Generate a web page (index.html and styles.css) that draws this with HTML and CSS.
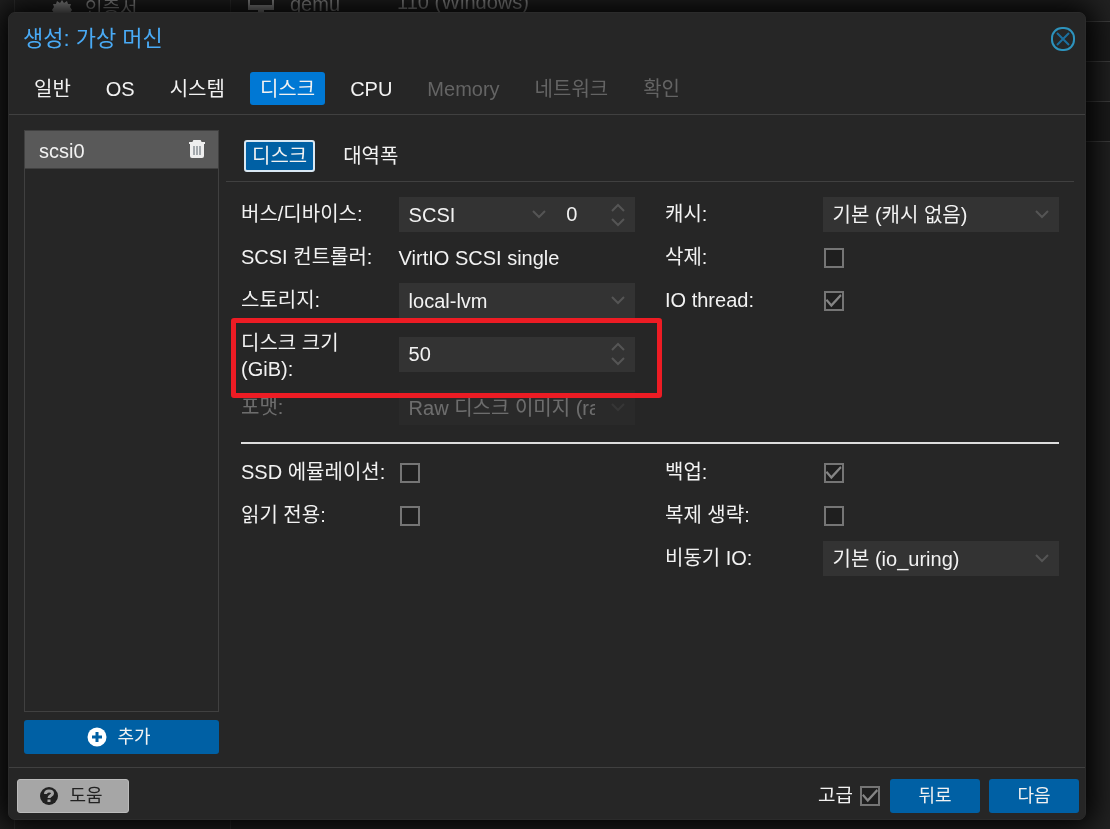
FILE: index.html
```html
<!DOCTYPE html>
<html lang="ko">
<head>
  <meta charset="UTF-8">
  <meta name="viewport" content="width=device-width, initial-scale=1.0">
  <title>생성: 가상 머신</title>
  <link rel="stylesheet" href="styles.css">
</head>
<body>
  <svg width="0" height="0" class="sprite" aria-hidden="true">
    <symbol id="down" viewBox="0 0 14 20"><path d="M1 6l6 6 6-6"/></symbol>
    <symbol id="spin" viewBox="0 0 14 24"><path d="M1 8l6-6 6 6M1 16l6 6 6-6"/></symbol>
  </svg>

  <!-- page behind the dialog -->
  <div class="backdrop">
    <div class="side">
      <svg width="20" height="20" viewBox="0 0 20 20"><path fill="currentColor" d="M10 0l2 3 3-2 1 3 3 0-1 3 2 3-2 3 1 3-3 0-1 3-3-2-2 3-2-3-3 2-1-3-3 0 1-3-2-3 2-3-1-3 3 0 1-3 3 2z"/></svg>
      <span>인증서</span>
    </div>
    <div class="grid">
      <div class="line first">
        <svg width="28" height="24" viewBox="0 0 28 24"><path fill="none" stroke="currentColor" stroke-width="2" d="M2 1h24v17H2z"/><path fill="currentColor" d="M2 14h24v4H2zM11 18h6v3h-6z"/></svg>
        <span>qemu</span>
        <span class="desc">110 (Windows)</span>
      </div>
      <div class="line"></div>
      <div class="line"></div>
      <div class="line"></div>
    </div>
  </div>

  <main class="wizard">
    <header class="title">
      <h1>생성: 가상 머신</h1>
      <button type="button" class="close" aria-label="닫기">
        <svg width="26" height="26" viewBox="0 0 26 26" fill="none"><rect x="2" y="2" width="22" height="22" rx="10" stroke="#2d93bd" stroke-width="2"/><path d="M7 7l12 12M19 7L7 19" stroke="#1b6f9f" stroke-width="2"/></svg>
      </button>
    </header>
    <nav class="tabs">
      <button type="button">일반</button>
      <button type="button">OS</button>
      <button type="button">시스템</button>
      <button type="button" class="active">디스크</button>
      <button type="button">CPU</button>
      <button type="button" disabled>Memory</button>
      <button type="button" disabled>네트워크</button>
      <button type="button" disabled>확인</button>
    </nav>

    <div class="content">
      <aside class="disks">
        <div class="disk-list">
          <div class="disk">
            <span>scsi0</span>
            <button type="button" aria-label="제거">
              <svg width="18" height="20" viewBox="0 0 18 20"><path fill="none" stroke="#eee" stroke-width="2" d="M5 4l1-2h6l1 2"/><path fill="#eee" d="M1 3h16v2H1zM2 5h14v12q0 2-2 2H4q-2 0-2-2z"/><path stroke="#59636b" stroke-width="1" d="M6 7v9M9 7v9M12 7v9"/></svg>
            </button>
          </div>
        </div>
        <button type="button" class="btn add">
          <svg width="20" height="20" viewBox="0 0 20 20"><circle cx="10" cy="10" r="9.500" fill="#fff"/><path stroke="#0060a4" stroke-width="3" d="M10 5v10M5 10h10"/></svg>
          추가
        </button>
      </aside>

      <section class="panel">
        <nav class="subtabs">
          <button type="button" class="active">디스크</button>
          <button type="button">대역폭</button>
        </nav>

        <form class="form">
          <div class="cols">
            <div class="col">
              <div class="row">
                <label for="bus">버스/디바이스:</label>
                <div class="pair">
                  <div class="field">
                    <select id="bus"><option>SCSI</option></select>
                    <svg class="arrow"><use href="#down"/></svg>
                  </div>
                  <div class="field">
                    <input type="number" value="0" aria-label="디바이스">
                    <svg class="spin"><use href="#spin"/></svg>
                  </div>
                </div>
              </div>
              <div class="row">
                <span class="label">SCSI 컨트롤러:</span>
                <span>VirtIO SCSI single</span>
              </div>
              <div class="row">
                <label for="storage">스토리지:</label>
                <div class="field">
                  <select id="storage"><option>local-lvm</option></select>
                  <svg class="arrow"><use href="#down"/></svg>
                </div>
              </div>
              <div class="row marked">
                <label for="size">디스크 크기 (GiB):</label>
                <div class="field">
                  <input id="size" type="number" value="50">
                  <svg class="spin"><use href="#spin"/></svg>
                </div>
              </div>
              <div class="row off">
                <label for="format">포맷:</label>
                <div class="field">
                  <select id="format" disabled><option>Raw 디스크 이미지 (raw)</option></select>
                  <svg class="arrow"><use href="#down"/></svg>
                </div>
              </div>
            </div>
            <div class="col">
              <div class="row">
                <label for="cache">캐시:</label>
                <div class="field">
                  <select id="cache"><option>기본 (캐시 없음)</option></select>
                  <svg class="arrow"><use href="#down"/></svg>
                </div>
              </div>
              <div class="row">
                <label for="discard">삭제:</label>
                <input id="discard" type="checkbox">
              </div>
              <div class="row">
                <label for="iothread">IO thread:</label>
                <input id="iothread" type="checkbox" checked>
              </div>
            </div>
          </div>

          <hr>

          <div class="cols">
            <div class="col">
              <div class="row">
                <label for="ssd">SSD 에뮬레이션:</label>
                <input id="ssd" type="checkbox">
              </div>
              <div class="row">
                <label for="readonly">읽기 전용:</label>
                <input id="readonly" type="checkbox">
              </div>
            </div>
            <div class="col">
              <div class="row">
                <label for="backup">백업:</label>
                <input id="backup" type="checkbox" checked>
              </div>
              <div class="row">
                <label for="norepl">복제 생략:</label>
                <input id="norepl" type="checkbox">
              </div>
              <div class="row">
                <label for="aio">비동기 IO:</label>
                <div class="field">
                  <select id="aio"><option>기본 (io_uring)</option></select>
                  <svg class="arrow"><use href="#down"/></svg>
                </div>
              </div>
            </div>
          </div>
        </form>
      </section>
    </div>

    <footer class="footer">
      <button type="button" class="btn help">
        <svg width="20" height="20" viewBox="0 0 20 20"><circle cx="10" cy="10" r="9" fill="#222"/><path fill="none" stroke="#a6a6a6" stroke-width="3" d="M6.500 8q0-3 3.500-3t3.500 2.500c0 2-3.500 2-3.500 4.500M10 13.500v2.500"/></svg>
        도움
      </button>
      <label class="advanced">고급 <input type="checkbox" checked></label>
      <button type="button" class="btn">뒤로</button>
      <button type="button" class="btn">다음</button>
    </footer>
  </main>
</body>
</html>
```
FILE: styles.css
```css
*, ::before, ::after {
  box-sizing: border-box;
}
body {
  display: flex;
  min-height: 100vh;
  margin: 0;
  color: #f2f2f2;
  font: 20px/26px "Liberation Sans", "Noto Sans CJK KR", sans-serif;
  background: #222;
}
button, input, select {
  margin: 0;
  padding: 0;
  color: inherit;
  font: inherit;
  background: none;
  border: 0;
  border-radius: 0;
}
.sprite {
  position: absolute;
}

/* page behind the dialog */
.backdrop {
  position: fixed;
  inset: 0;
  z-index: -1;
  display: flex;
  overflow: hidden;
  color: #999;
}
.side {
  display: flex;
  align-items: flex-start;
  gap: 13px;
  width: 217px;
  margin-left: 14px;
  padding-left: 37px;
  border: 1px solid #333;
  border-width: 0 1px;
}
.side span {
  margin-top: -4px;
  font-size: 19px;
}
.grid {
  flex: 1;
}
.line {
  height: 40px;
  border-bottom: 1px solid #404040;
}
.line:nth-child(even) {
  background: #1c1c1c;
}
.line.first {
  display: flex;
  align-items: flex-start;
  gap: 15px;
  height: 22px;
  padding-left: 16px;
}
.first svg {
  margin-top: -9px;
}
.first span {
  margin-top: -9px;
}
.first .desc {
  margin: -11px 0 0 42px;
}

.wizard {
  flex: 1;
  display: flex;
  flex-direction: column;
  min-width: 0;
  margin: 12px 24px 9px 8px;
  background: #262626;
  border: 1px solid #2b2b2b;
  border-radius: 7px;
  box-shadow: 0 0 30px 8px #000;
}
.title {
  display: flex;
  align-items: center;
  justify-content: space-between;
  height: 52px;
  padding: 0 9px 0 14px;
}
.title h1 {
  margin: 0;
  color: #49aaf5;
  font-size: 22px;
  font-weight: normal;
}
.close {
  display: flex;
}
.tabs {
  display: flex;
  gap: 15px;
  height: 50px;
  padding: 7px 15px 9px;
  border-bottom: 1px solid #404040;
}
.tabs button, .subtabs button {
  padding: 0 10px;
  border-radius: 3px;
}
.tabs .active {
  background: #0078d4;
}
.tabs button:disabled {
  color: #646464;
}

.content {
  flex: 1;
  display: flex;
  gap: 7px;
  padding: 15px 11px 13px 15px;
}
.disks {
  display: flex;
  flex-direction: column;
  gap: 8px;
  width: 195px;
}
.disk-list {
  flex: 1;
  border: 1px solid #404040;
}
.disk {
  display: flex;
  align-items: center;
  justify-content: space-between;
  height: 38px;
  padding: 2px 12px 0 14px;
  background: #595959;
  border-bottom: 1px solid #404040;
}
.disk button {
  display: flex;
  padding-bottom: 4px;
}
.btn {
  display: flex;
  align-items: center;
  justify-content: center;
  gap: 10px;
  width: 90px;
  height: 34px;
  font-size: 18px;
  background: #0060a4;
  border-radius: 3px;
}
.add {
  width: 100%;
  padding-right: 5px;
}

.panel {
  flex: 1;
  min-width: 0;
}
.subtabs {
  display: flex;
  align-items: center;
  gap: 18px;
  height: 52px;
  padding-left: 18px;
  border-bottom: 1px solid #404040;
}
.subtabs button {
  height: 32px;
}
.subtabs .active {
  padding: 0 6px;
  background: #0060a4;
  border: 2px solid #d9e8f3;
}
.form {
  padding: 15px 15px 0;
}
.cols {
  display: grid;
  grid-template-columns: 1fr 1fr;
  gap: 30px;
}
.col {
  display: flex;
  flex-direction: column;
  gap: 8px;
  min-width: 0;
}
.row {
  position: relative;
  display: grid;
  grid-template-columns: 2fr 3fr;
  align-items: center;
  min-height: 35px;
}
.row label, .label {
  align-self: start;
  padding: 4px 8px 0 0;
}
.pair {
  display: grid;
  grid-template-columns: 2fr 1fr;
}
.field {
  display: grid;
  align-items: center;
  min-width: 0;
  height: 35px;
  background: #333;
}
.field > * {
  grid-area: 1 / 1;
}
.field select, .field input {
  width: 100%;
  min-width: 0;
  height: 35px;
  padding: 0 40px 0 10px;
  appearance: none;
  -moz-appearance: textfield;
}
.field select:disabled {
  opacity: 1;
}
.field ::-webkit-inner-spin-button {
  appearance: none;
}
.arrow, .spin {
  justify-self: end;
  width: 14px;
  height: 20px;
  margin-right: 10px;
  fill: none;
  stroke: #555;
  stroke-width: 2;
  pointer-events: none;
}
.spin {
  height: 24px;
}
.off {
  opacity: .35;
}
/* red frame round the row to change */
.marked::after {
  content: "";
  position: absolute;
  inset: -8px -27px -16px -10px;
  z-index: 1;
  border: 5px solid #ed1c24;
  border-radius: 3px;
  pointer-events: none;
}
[type="checkbox"] {
  display: grid;
  width: 20px;
  height: 20px;
  margin-left: 1px;
  appearance: none;
  background: #1f1f1f;
  border: 2px solid #757575;
}
[type="checkbox"]:checked::after {
  content: "";
  background: #858585;
  clip-path: polygon(0 50%, 10% 40%, 36% 70%, 92% 10%, 100% 22%, 36% 92%);
}
hr {
  height: 2px;
  margin: 17px 0 11px;
  background: #ddd;
  border: 0;
}

.footer {
  display: flex;
  align-items: center;
  gap: 9px;
  height: 52px;
  padding: 4px 6px 0 8px;
  border-top: 1px solid #404040;
}
.help {
  width: 112px;
  margin-right: auto;
  padding-right: 4px;
  color: #222;
  background: #a6a6a6;
  border: 1px solid #bbb;
}
.advanced {
  display: flex;
  align-items: center;
  gap: 6px;
  margin-right: 1px;
  font-size: 19px;
}
```
